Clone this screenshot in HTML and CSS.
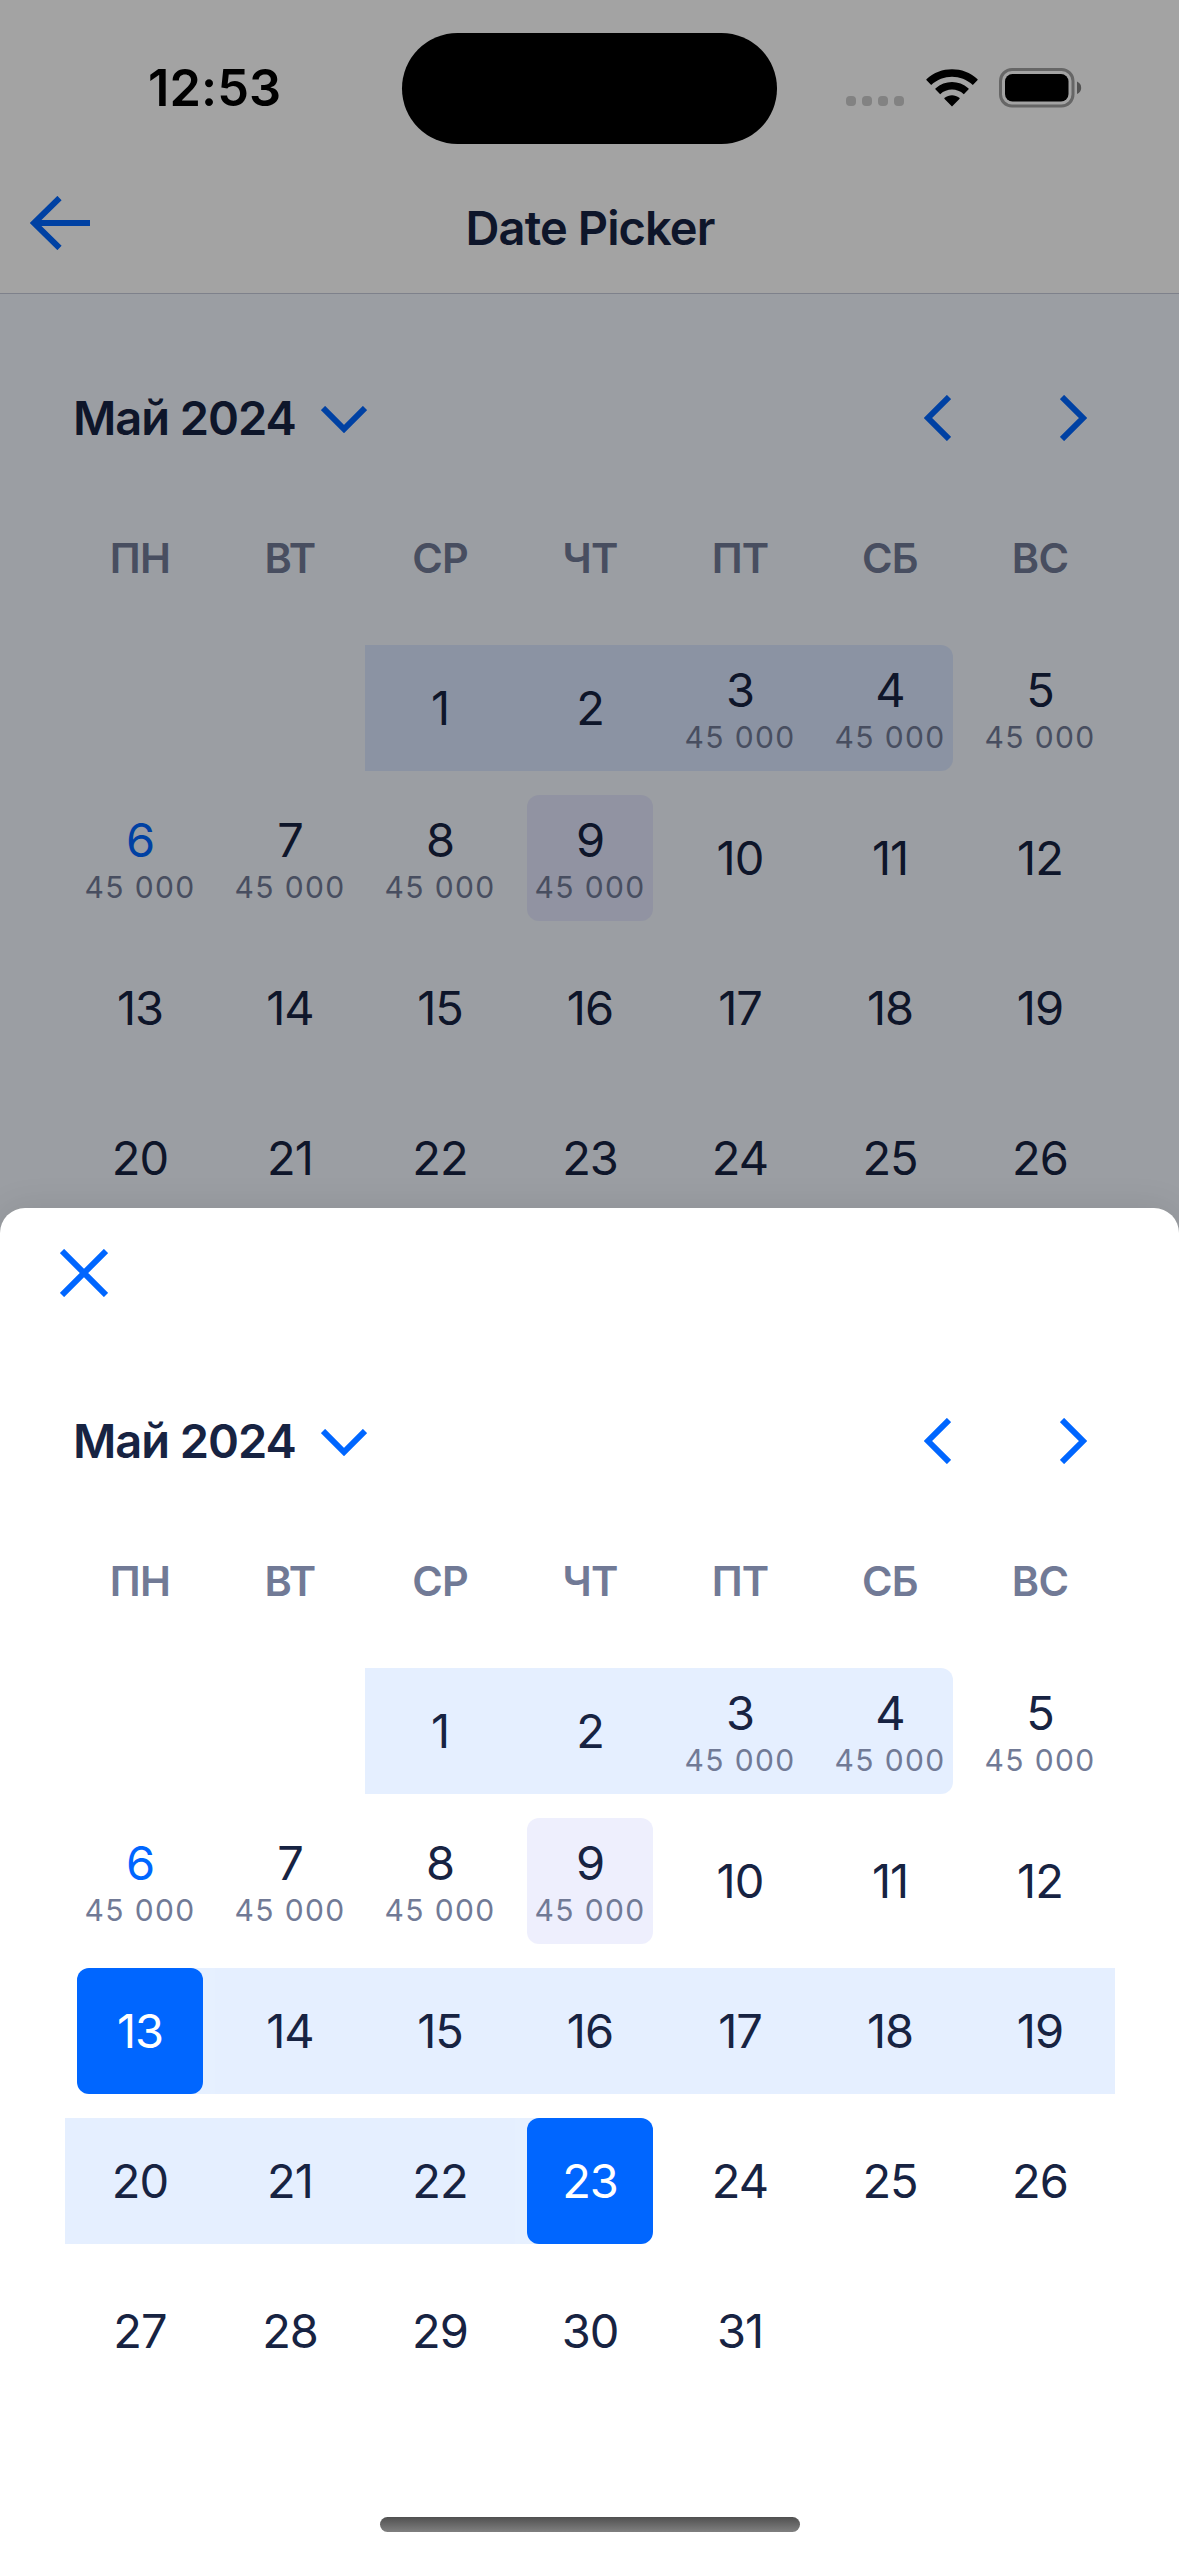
FILE: index.html
```html
<!DOCTYPE html>
<html lang="ru">
<head>
<meta charset="utf-8">
<title>Date Picker</title>
<link rel="stylesheet" href="styles.css">
</head>
<body>
<div class="screen">
  <div class="page">
    <header class="header">
      <div class="status">
        <span class="status-time">12:53</span>
        <span class="island"></span>
        <div class="status-icons">
          <div class="dots"><i></i><i></i><i></i><i></i></div>
          <svg class="wifi" width="52" height="38" viewBox="0 0 52 38">
            <path d="M5.2 16 L0.6 11.3 Q0 10.6 .7 10 C14.500 -3 37.500 -3 51.300 10 Q52 10.600 51.400 11.300 L46.800 16 C35 5 17 5 5.200 16Z M14.200 25.200 L9.600 20.500 Q9 19.900 9.700 19.300 C19 10.800 33 10.800 42.300 19.300 Q43 19.900 42.400 20.500 L37.800 25.200 C31 19 21 19 14.200 25.200Z M26 37.500 L18.600 30 Q18 29.300 18.700 28.700 C23 25.300 29 25.300 33.300 28.700 Q34 29.300 33.400 30Z"/>
          </svg>
          <svg class="battery" width="83" height="40" viewBox="0 0 83 40">
            <rect class="battery-shell" x="1.500" y="1.500" width="72.500" height="36.500" rx="11.500"/>
            <rect x="6" y="6" width="63.500" height="27.500" rx="7.500"/>
            <path class="battery-tip" d="M78 13.500 Q82.200 15.500 82.200 19.700 Q82.200 24 78 26Z"/>
          </svg>
        </div>
      </div>
      <div class="navbar">
        <svg class="back" width="60" height="54" viewBox="0 0 60 54"><path d="M60 27H4M29.500 2L4 27L29.500 52"/></svg>
        <h1 class="title">Date Picker</h1>
      </div>
    </header>
    <section class="calendar">
      <div class="month-bar">
        <span class="month">Май 2024</span>
        <svg class="chev-down" width="46" height="27" viewBox="0 0 46 27"><path d="M2 2L23 23L44 2"/></svg>
        <svg class="chev-side chev-prev" width="27" height="46" viewBox="0 0 27 46"><path d="M25 2L4 23L25 44"/></svg>
        <svg class="chev-side" width="27" height="46" viewBox="0 0 27 46"><path d="M2 2L23 23L2 44"/></svg>
      </div>
      <div class="week weekdays"><span>ПН</span><span>ВТ</span><span>СР</span><span>ЧТ</span><span>ПТ</span><span>СБ</span><span>ВС</span></div>
      <div class="days">
        <div class="day"></div><div class="day"></div>
        <div class="day range"><b>1</b></div><div class="day range"><b>2</b></div>
        <div class="day range"><b>3</b><small>45 000</small></div>
        <div class="day range range-end"><b>4</b><small>45 000</small></div>
        <div class="day"><b>5</b><small>45 000</small></div>
        <div class="day today"><b>6</b><small>45 000</small></div>
        <div class="day"><b>7</b><small>45 000</small></div>
        <div class="day"><b>8</b><small>45 000</small></div>
        <div class="day marked"><b>9</b><small>45 000</small></div>
        <div class="day"><b>10</b></div><div class="day"><b>11</b></div><div class="day"><b>12</b></div>
        <div class="day"><b>13</b></div><div class="day"><b>14</b></div><div class="day"><b>15</b></div><div class="day"><b>16</b></div><div class="day"><b>17</b></div><div class="day"><b>18</b></div><div class="day"><b>19</b></div>
        <div class="day"><b>20</b></div><div class="day"><b>21</b></div><div class="day"><b>22</b></div><div class="day"><b>23</b></div><div class="day"><b>24</b></div><div class="day"><b>25</b></div><div class="day"><b>26</b></div>
      </div>
    </section>
  </div>
  <div class="dim"></div>
  <div class="sheet">
    <div class="sheet-bar">
      <svg class="close" width="48" height="48" viewBox="0 0 48 48"><path d="M2 2L46 46M46 2L2 46"/></svg>
    </div>
    <section class="calendar">
      <div class="month-bar">
        <span class="month">Май 2024</span>
        <svg class="chev-down" width="46" height="27" viewBox="0 0 46 27"><path d="M2 2L23 23L44 2"/></svg>
        <svg class="chev-side chev-prev" width="27" height="46" viewBox="0 0 27 46"><path d="M25 2L4 23L25 44"/></svg>
        <svg class="chev-side" width="27" height="46" viewBox="0 0 27 46"><path d="M2 2L23 23L2 44"/></svg>
      </div>
      <div class="week weekdays"><span>ПН</span><span>ВТ</span><span>СР</span><span>ЧТ</span><span>ПТ</span><span>СБ</span><span>ВС</span></div>
      <div class="days">
        <div class="day"></div><div class="day"></div>
        <div class="day range"><b>1</b></div><div class="day range"><b>2</b></div>
        <div class="day range"><b>3</b><small>45 000</small></div>
        <div class="day range range-end"><b>4</b><small>45 000</small></div>
        <div class="day"><b>5</b><small>45 000</small></div>
        <div class="day today"><b>6</b><small>45 000</small></div>
        <div class="day"><b>7</b><small>45 000</small></div>
        <div class="day"><b>8</b><small>45 000</small></div>
        <div class="day marked"><b>9</b><small>45 000</small></div>
        <div class="day"><b>10</b></div><div class="day"><b>11</b></div><div class="day"><b>12</b></div>
        <div class="day selected selected-start"><b>13</b></div><div class="day range"><b>14</b></div><div class="day range"><b>15</b></div><div class="day range"><b>16</b></div><div class="day range"><b>17</b></div><div class="day range"><b>18</b></div><div class="day range"><b>19</b></div>
        <div class="day range"><b>20</b></div><div class="day range"><b>21</b></div><div class="day range"><b>22</b></div><div class="day selected selected-end"><b>23</b></div><div class="day"><b>24</b></div><div class="day"><b>25</b></div><div class="day"><b>26</b></div>
        <div class="day"><b>27</b></div><div class="day"><b>28</b></div><div class="day"><b>29</b></div><div class="day"><b>30</b></div><div class="day"><b>31</b></div>
      </div>
    </section>
    <div class="home"></div>
  </div>
</div>
</body>
</html>
```
FILE: styles.css
```css
* { box-sizing: border-box; }

body {
  margin: 0;
  font-family: Inter, "Liberation Sans", sans-serif;
  color: #172342;
}

svg { display: block; flex: none; }

.screen {
  position: relative;
  width: 1179px;
  height: 2556px;
  overflow: hidden;
}

.page {
  height: 2556px;
  background: #f3f7ff;
}

.header {
  height: 294px;
  background: #fff;
  border-bottom: 1px solid #c6cad9;
}

.status {
  display: flex;
  align-items: center;
  height: 176px;
  color: #000;
}

.status-time {
  width: 402px;
  padding: 0 0 2px 148px;
  font-size: 50.5px;
  font-weight: 600;
  letter-spacing: 0.1px;
}

.island {
  width: 375px;
  height: 111px;
  margin-top: 1px;
  border-radius: 56px;
  background: #000;
}

.status-icons {
  display: flex;
  align-items: center;
  margin-left: 69px;
}

.dots {
  display: flex;
  gap: 6px;
  padding-top: 26px;
}

.dots i {
  width: 10px;
  height: 10px;
  border-radius: 4px;
  background: #ccc;
}

.wifi { margin-left: 22px; }
.battery { margin-left: 21px; }

.battery-shell {
  fill: none;
  stroke: #a0a0a0;
  stroke-width: 3;
}

.battery-tip { fill: #808080; }

.navbar {
  display: grid;
  grid-template-columns: 90px 1fr 90px;
  height: 94px;
  align-items: center;
}

.back,
.close,
.chev-down,
.chev-side {
  fill: none;
  stroke: #06f;
  stroke-width: 6;
}

.back { margin-left: 30px; }

.title {
  margin: 0;
  padding: 8px 0 0 1px;
  text-align: center;
  font-size: 47px;
  font-weight: 600;
  letter-spacing: -0.9px;
}

.calendar { padding: 0 64px 0 65px; }

.page .calendar { padding-top: 82px; }

.month-bar {
  display: flex;
  align-items: center;
  height: 84px;
  padding: 0 28px 0 8px;
}

.month {
  width: 248px;
  padding-bottom: 2px;
  white-space: nowrap;
  font-size: 47px;
  font-weight: 600;
  letter-spacing: -1.05px;
}

.chev-down { margin-top: 2px; }

.chev-prev { margin: 0 109px 0 auto; }

.week {
  display: grid;
  grid-template-columns: repeat(7, 150px);
}

.weekdays {
  height: 174px;
  padding-top: 72px;
  line-height: 52px;
  text-align: center;
  font-size: 41.5px;
  font-weight: 600;
  letter-spacing: -0.8px;
  color: #717a96;
}

.days {
  display: grid;
  grid-template-columns: repeat(7, 150px);
  grid-auto-rows: 126px;
  gap: 24px 0;
  padding-top: 11px;
}

.day {
  display: flex;
  flex-direction: column;
  align-items: center;
  justify-content: center;
}

.day b {
  font-size: 47px;
  line-height: 56px;
  font-weight: 400;
  letter-spacing: -1px;
}

.day small {
  height: 36px;
  line-height: 38px;
  font-size: 30px;
  font-weight: 400;
  letter-spacing: 1.4px;
  color: #717a96;
}

.range { background: rgba(0, 102, 255, 0.1); }

.range-end {
  margin-right: 12px;
  padding-left: 12px;
  border-radius: 0 12px 12px 0;
}

.today b { color: #06f; }

.marked {
  margin: 0 12px;
  border-radius: 12px;
  background: rgba(85, 95, 235, 0.1);
}

.selected { padding: 0 12px; }

.selected b {
  width: 126px;
  border-radius: 12px;
  line-height: 126px;
  text-align: center;
  color: #fff;
  background: #06f;
}

.selected-start { background: linear-gradient(90deg, transparent 50%, #e6f0ff 50%); }
.selected-end { background: linear-gradient(90deg, #e6f0ff 50%, transparent 50%); }

.dim {
  position: absolute;
  inset: 0;
  background: rgba(0, 0, 0, 0.36);
}

.sheet {
  position: absolute;
  left: 0;
  right: 0;
  bottom: 0;
  height: 1348px;
  border-radius: 25px 25px 0 0;
  background: #fff;
  box-shadow: 0 0 36px rgba(0, 0, 0, 0.09);
}

.sheet-bar {
  height: 191px;
  padding: 41px 60px 0;
}

.home {
  position: absolute;
  left: 380px;
  bottom: 24px;
  width: 420px;
  height: 15px;
  border-radius: 8px;
  background: linear-gradient(#505050, #808080);
}
```
